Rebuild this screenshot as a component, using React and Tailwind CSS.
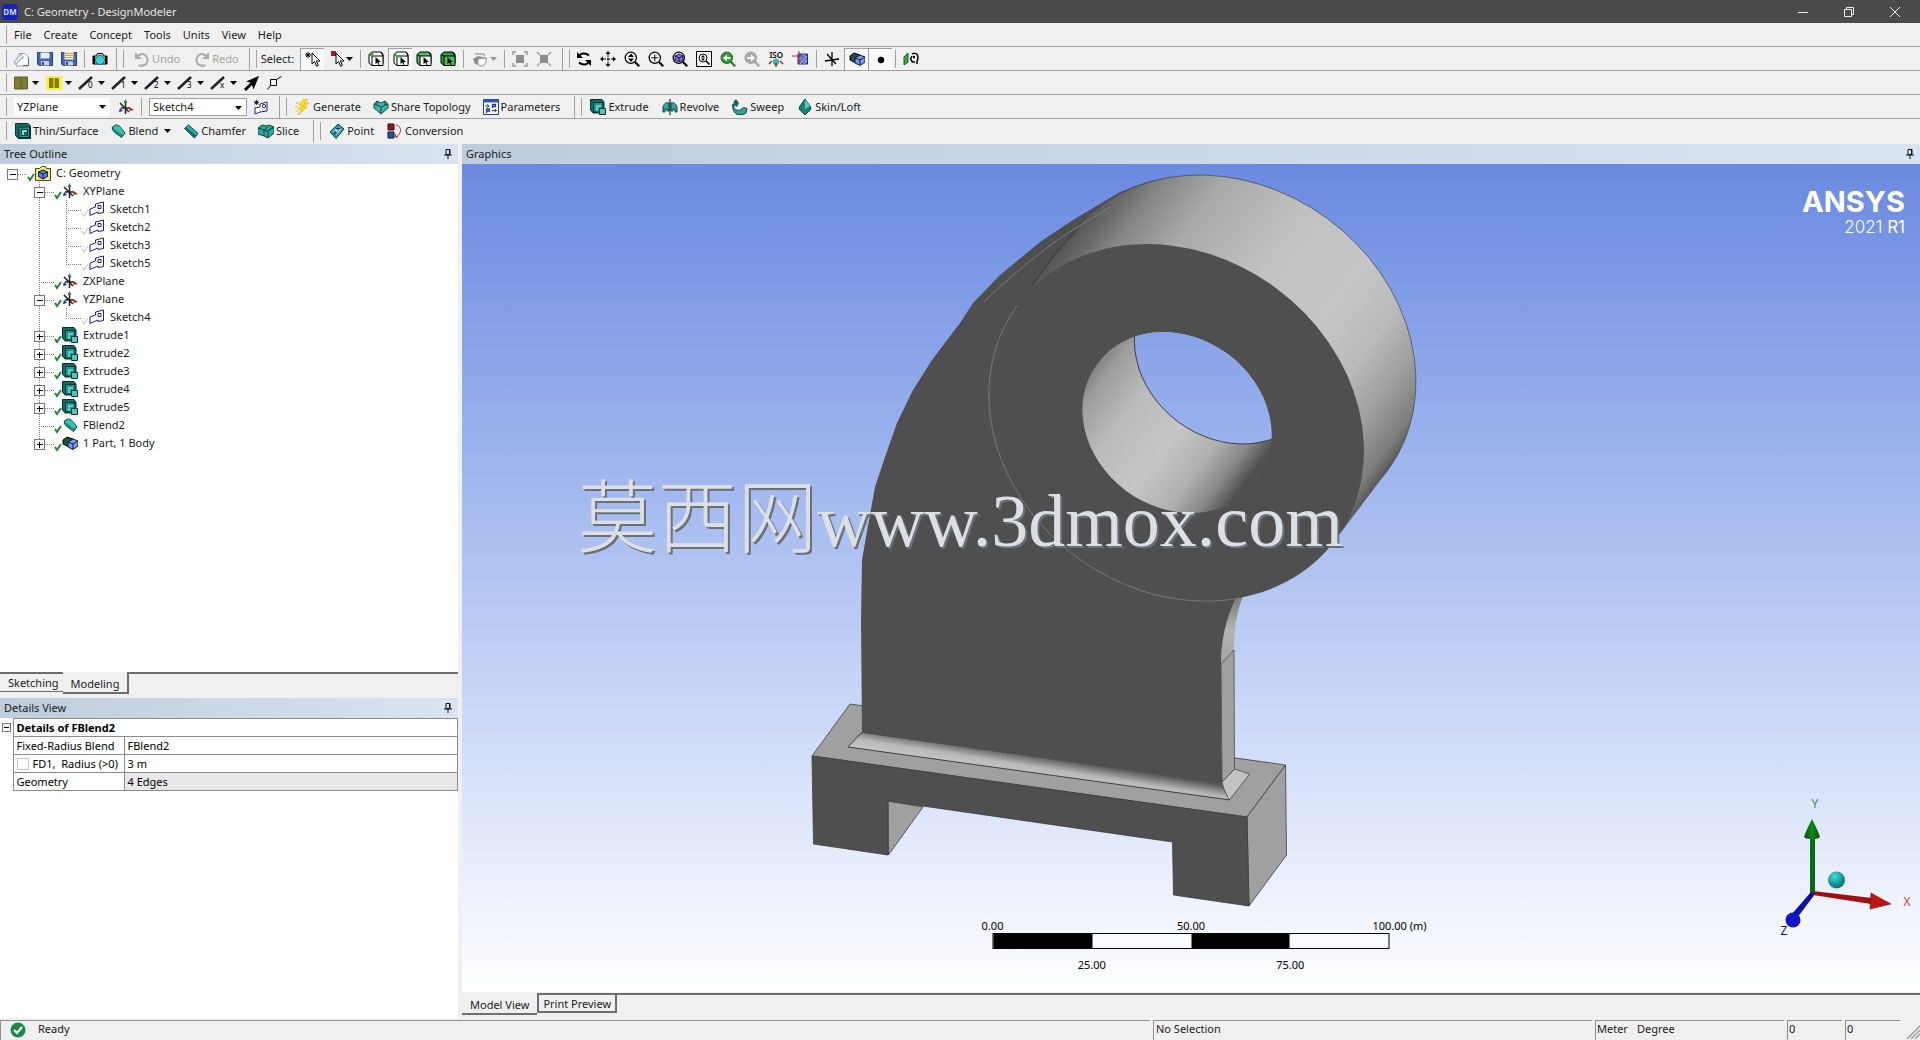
import React, { useState } from "react";

// Small 16x16 drawing used by all toolbar and tree icons
function Icon({ children, className = "" }) {
  return (
    <svg className={`w-4 h-4 shrink-0 ${className}`} viewBox="0 0 16 16" fill="none" aria-hidden="true">
      {children}
    </svg>
  );
}

function CubeOutline({ face = "#fff", side = "#fff" }) {
  return (
    <>
      <path d="M1 3.5 4 1h9l2 2v9l-2 2.5H4L1 12z" fill={side} stroke="#000" />
      <path d="M4 5h11v9.5H4z" fill={face} stroke="#000" />
      <path d="M1 3.5 4 5M13 1l2 4" stroke="#000" />
      <path d="M7.5 6v7l1.8-1.6L10.5 14l1-.6-1-2.4H13z" fill="#000" />
    </>
  );
}

function Glass({ children, color = "#000", fill = "#fff" }) {
  return (
    <>
      <circle cx="6.8" cy="6.8" r="5.6" fill={fill} stroke={color} strokeWidth="1.3" />
      <path d="m11 11 4.2 4.2" stroke={color} strokeWidth="2.2" />
      {children}
    </>
  );
}

function ArrowCursor({ x = 0 }) {
  return (
    <path
      d={`M${6 + x} 2v11l2.6-2.4 2 4.6 1.8-.8-2-4.4H${14 + x}z`}
      fill="#fff"
      stroke="#000"
      strokeWidth="1"
    />
  );
}

const icons = {
  new: (
    <>
      <path d="M6 2.5h6L15.500 6v9H3" fill="#fff" stroke="#9aa3c4" />
      <path d="M1 11c2-1 3-4 6-8 2 1 3 2 3 4-3 1-5 3-7 7z" fill="#e8eaf2" stroke="#8d93a8" />
      <path d="M10 14.500h5.500V7" stroke="#5a6490" />
    </>
  ),
  save: (
    <>
      <path d="M.5 1.500h15v13H2l-1.500-1.500z" fill="#4763b3" stroke="#27408b" />
      <path d="M3.500 1.500h9v6h-9z" fill="#e9eefb" />
      <path d="M4 10h8v4.500H4z" fill="#c8cfdf" />
      <path d="M5 11h2v3H5z" fill="#27408b" />
    </>
  ),
  saveAs: (
    <>
      <path d="M.5 1.500h15v13H2l-1.500-1.500z" fill="#4763b3" stroke="#27408b" />
      <path d="M3.500.5h9v8h-9z" fill="#fff6df" />
      <path d="M4 2.500h8M4 4.500h8M4 6.500h8" stroke="#e09a3a" />
      <path d="M4 10.500h8v4H4z" fill="#c8cfdf" />
      <path d="M5 11h2v3H5z" fill="#27408b" />
    </>
  ),
  camera: (
    <>
      <path d="M1 5h3l1.500-2.500h5L12 5h3v8H1z" fill="#c9ccd0" stroke="#000" />
      <path d="M1 5h2v8H1zM13 5h2v8h-2z" fill="#000" />
      <circle cx="8" cy="9" r="4.500" fill="#3bd3d3" stroke="#077" />
    </>
  ),
  undo: <path d="M2 2v5h5M2.500 7C4 3.500 8 2 11 4s3.500 6.500 1 9-6 2-7.500 1" stroke="#a9a9a9" strokeWidth="2" />,
  redo: <path d="M14 2v5H9M13.500 7C12 3.500 8 2 5 4s-3.500 6.500-1 9 6 2 7.500 1" stroke="#a9a9a9" strokeWidth="2" />,
  selectNew: (
    <>
      <ArrowCursor x={1} />
      <path d="M3 1v6M0 4h6M1 2l4 4M5 2 1 6" stroke="#000" />
    </>
  ),
  selectBox: (
    <>
      <path d="M1 0h5v5H1z" fill="#9b1c2f" />
      <ArrowCursor />
    </>
  ),
  vertexCube: (
    <>
      <CubeOutline />
      <circle cx="3.500" cy="3.500" r="2" fill="#35b04b" />
    </>
  ),
  edgeCube: (
    <>
      <CubeOutline />
      <path d="M1.500 3.500 4.500 5.500h5" stroke="#35b04b" strokeWidth="2" />
    </>
  ),
  faceCube: <CubeOutline side="#46c45a" />,
  bodyCube: <CubeOutline side="#2d9c3c" face="#46c45a" />,
  greyCube: (
    <>
      <path d="M1 8l5-3 9 2-4 8-8-2z" fill="#8f8f8f" />
      <path d="M6 8l8-1v5l-4 3-4-1z" fill="#fff" stroke="#999" />
      <path d="M3 3h8l2 2" stroke="#a6a6a6" strokeWidth="1.500" />
    </>
  ),
  extend: (
    <>
      <path d="M4 4h8v8H4z" fill="#8c8c8c" />
      <path d="M1 4V1h3M12 1h3v3M15 12v3h-3M4 15H1v-3" stroke="#999" strokeWidth="1.500" />
    </>
  ),
  shrink: (
    <>
      <path d="M4 4h8v8H4z" fill="#8c8c8c" />
      <path d="m1 1 3 3M15 1l-3 3M15 15l-3-3M1 15l3-3" stroke="#999" strokeWidth="1.300" />
    </>
  ),
  rotate: (
    <>
      <path d="M2.500 5.500C4 2.500 9 1 13 4.500M13.500 10.500C12 13.500 7 15 3 11.500" stroke="#000" strokeWidth="2" />
      <path d="M1 1v6h6zM15 15V9H9z" fill="#000" />
    </>
  ),
  pan: (
    <>
      <path d="M8 3v10M3 8h10" stroke="#000" strokeDasharray="3 1" />
      <path d="m8 0 2.500 3h-5zM8 16l2.500-3h-5zM0 8l3-2.500v5zM16 8l-3-2.500v5z" fill="#000" />
    </>
  ),
  zoom: <Glass><path d="m7 2.500 3 3.500H4zM7 11l3-3.500H4z" fill="#000" /></Glass>,
  zoomIn: <Glass><path d="M6.800 3.500v7M3.300 6.800h7" stroke="#000" /></Glass>,
  zoomBody: (
    <Glass>
      <path d="m3 5 4-2 4 2v4l-4 2-4-2z" fill="#7b78d6" stroke="#1b1464" />
      <path d="m3 5 4 2 4-2M7 7v4" stroke="#1b1464" />
    </Glass>
  ),
  zoomBox: (
    <>
      <path d="M.5.5h15v15H.5z" fill="#fff" stroke="#000" />
      <circle cx="7" cy="7" r="4" stroke="#000" />
      <path d="m7 4 2 2.500H5zM7 10l2-2.500H5z" fill="#000" />
      <path d="m10 10 3.500 3.500" stroke="#000" strokeWidth="1.700" />
    </>
  ),
  zoomPrev: <Glass color="#1f7a1f" fill="#3f9b3a"><path d="M3 7l4-3.500V6h3.500v2H7v2.500z" fill="#fff" /></Glass>,
  zoomNext: <Glass color="#a3a3a3" fill="#a9a9a9"><path d="M11 7 7 3.500V6H3.500v2H7v2.500z" fill="#fff" /></Glass>,
  sketchPlane: (
    <>
      <path d="M6 3h9.500v10H6z" fill="#6177cf" stroke="#1e2a7a" />
      <path d="m6 9 6-6M8 13l7-8M12 13l3-4" stroke="#aebaf0" />
      <path d="M7 0v13M0 5h11" stroke="#b0203a" />
    </>
  ),
  axes: <path d="M8 1v14M1 10l14-2M3 3l9 10" stroke="#000" strokeWidth="1.300" />,
  shaded: (
    <>
      <path d="m1 5 4-3 6 2v7l-4 1-6-3z" fill="#1f5436" stroke="#000" />
      <path d="m6 7 5-3 5 2v5l-5 3.500L6 12z" fill="#7d9be4" stroke="#0d1c52" />
      <path d="m6 7 5 2 5-3M11 9v5" stroke="#0d1c52" />
    </>
  ),
  dot: <circle cx="8" cy="9" r="3.200" fill="#000" />,
  lookAt: (
    <>
      <path d="m1 6 4-4v9l-4 3z" fill="#33b04a" stroke="#0b5c1c" />
      <path d="M9 3c3-2 6 0 6 3s-1 3-1 5v2M9 5c-1 2-2 3-1 4 1 0 0 2 2 2h2" stroke="#000" strokeWidth="1.500" />
      <circle cx="11" cy="6" r="1.200" fill="#000" />
    </>
  ),
  olive: <path d="M1.500 2h13v12h-13zM8 2v12" fill="#7e7e3c" stroke="#5f5f24" />,
  yellow: (
    <>
      <path d="M0 1h16v14H0z" fill="#f4f04a" />
      <path d="M3 3h4.500v10H3zM8.500 3H13v10H8.500z" fill="#857f00" />
    </>
  ),
  bigArrow: <path d="M15 1 2 6.500l4.500 1L0 14l2 2 6-6 1.500 4.500z" fill="#000" />,
  boxArrow: (
    <>
      <path d="M3.500 4.500h6v6h-6z" stroke="#000" fill="#fff" />
      <path d="m9.500 4.500 5-3M3.500 10.500l-3 4" stroke="#000" />
    </>
  ),
  plane: (
    <>
      <path d="M7.500 2v13M2 4l9 9M3 9h9" stroke="#222" strokeWidth="1.500" />
      <path d="m7.500 0 2 4h-4z" fill="#2c8f3f" />
      <path d="m16 11-4.500 1V8z" fill="#b3262c" />
      <path d="m1 13 1-4 3 3z" fill="#1d2a9a" />
    </>
  ),
  newSketch: (
    <>
      <path d="m2 9 5-1V5l7-2v9l-7 1-5 2z" stroke="#20208a" fill="#fff" />
      <circle cx="11" cy="7" r="1.700" stroke="#20208a" />
      <path d="M3.500 1v5M1 3.500h5M1.500 1.500l4 4M5.500 1.500l-4 4" stroke="#000" strokeWidth=".8" />
    </>
  ),
  sketch: (
    <>
      <path d="M1 8 6.500 6V3L14.500 1v10.500L9 12.500V11l-6 2.500-2 1z" stroke="#20207a" fill="#fff" />
      <path d="M9 4.500h3v3H9z" stroke="#20207a" />
    </>
  ),
  generate: (
    <>
      <path d="m9 0-5 6h4l-5 4h4l-4 6 9-8H8l6-4H9l4-4z" fill="#ffe600" stroke="#c9a300" strokeWidth=".6" />
      <path d="M1 4h3M0 8h3M1 12h2" stroke="#e5c100" />
    </>
  ),
  share: (
    <>
      <path d="M1 5 4 2l4 2 4-2 3 3v4l-7 6-7-6z" fill="#3fb5a8" stroke="#0c4d49" />
      <path d="m1 5 7 3 7-3M8 8v7M4 2v4M12 2v4" stroke="#0c4d49" />
    </>
  ),
  params: (
    <>
      <path d="M.5.5h15v15H.5z" fill="#fff" stroke="#1d3e8a" />
      <path d="M.5.5h15v3H.5z" fill="#2d5ab8" />
      <path d="M2 7h4M4 5.500 6 7 4 8.500M9 11.500h4M11.500 10l2 1.500-2 1.500" stroke="#1d3e8a" />
      <path d="M9.500 9V5.500h3v2h-3M3.500 14v-4h3v2h-3" stroke="#1d3e8a" strokeWidth="1.300" />
    </>
  ),
  extrude: (
    <>
      <path d="M.5.5 12 .5 14 3v11H3L.5 11z" fill="#126d66" stroke="#06302f" />
      <path d="M3.500 3.500h9.500v9.500H3.500z" fill="#1d968c" stroke="#06302f" />
      <path d="M6 6h5v2H8v4H6z" fill="#57d0c6" />
      <path d="M9.500 9.500h6v6h-6z" fill="#4cc7bd" stroke="#06302f" />
    </>
  ),
  thin: (
    <>
      <path d="M.5.5 13 .5 15.500 3v12.500H3L.5 12z" fill="#126d66" stroke="#06302f" />
      <path d="M4 4h10.500v10.500H4z" fill="#1d968c" stroke="#06302f" />
      <path d="M6.500 6.500h6v6h-6z" fill="#8fd8d2" stroke="#06302f" />
      <path d="M9 9h3.500v3.500H9z" fill="#126d66" />
    </>
  ),
  revolve: (
    <>
      <path d="M1 8c1-4 4-5 6-4v8H5v-2H3v3H1zM15 8c-1-4-4-5-6-4v8h2v-2h2v3h2z" fill="#2fa79c" stroke="#0a4643" />
      <path d="M8 0v16" stroke="#000" />
    </>
  ),
  sweep: (
    <>
      <path d="M1.500 5c0 5 2 7 7 6l3-2.500 3.500 1-1 4.500-3 1.500H6C2 14.500.500 10 .5 6z" fill="#2fa79c" stroke="#0a4643" />
      <path d="m4 0 3 4-2 4-4-2 1-4z" fill="#126d66" />
    </>
  ),
  skin: (
    <>
      <path d="m8 0 5 7 1 3-6 6-6-6 1-3z" fill="#1d8077" stroke="#0a4643" />
      <path d="m8 0 5 7-5 3z" fill="#57c7bd" />
    </>
  ),
  blend: (
    <>
      <path d="M2 4.500 5.500 2c3 0 5 1.500 6 3.500L15 10l-3.500 4.500L7 11C5 10 2.500 8 2 4.500z" fill="#179287" stroke="#0a4643" />
      <path d="M5.500 2.500c3 0 5 1.500 6 3.500l3 4-2 2L3 5z" fill="#40bdb1" />
    </>
  ),
  chamfer: (
    <>
      <path d="m1.500 5.500 4-3.500L15 10.500 11.500 15z" fill="#2fb0a4" stroke="#0a4643" />
      <path d="m1.500 5.500 10 9.500 1.500-2.500L3 4z" fill="#126d66" />
    </>
  ),
  slice: (
    <>
      <path d="m0 5 4-3 4 1 3-1 5 2v6l-6 5-4-2-6-2z" fill="#2fa79c" stroke="#0a4643" />
      <path d="m0 5 6 2 4-3M6 7v6M6 7l4 1 6-4M10 8v7M11 7l4-2.500" stroke="#0a4643" />
    </>
  ),
  point: (
    <>
      <path d="m1 9 8-8 6 5-8 9.500z" fill="#2f9a98" stroke="#0a4643" />
      <path d="m3.500 9 5.500-5.500L12.500 6 7 12.500z" fill="#9ad4e0" />
      <path d="M9 3.500v4M7 5.500h4M6 8v4M4 10h4" stroke="#102a6a" />
    </>
  ),
  conversion: (
    <>
      <path d="M1 1h6v6H1z" fill="#8a1c2d" stroke="#400" />
      <path d="M1 9h6v6H1z" fill="#2b56a8" stroke="#013" />
      <path d="M9 2c6 1 6 9 0 12M11 14H8.500v-3" stroke="#c0392b" />
    </>
  ),
  folder: (
    <>
      <path d="M.5 3.500h4l2-2h4l1 2h4v12H.5z" fill="#f5e77a" stroke="#4a4520" />
      <path d="m3.500 7 4.500-2 4.500 2v4.500L8 14l-4.500-2.500z" fill="#5f83cf" stroke="#0d1c52" />
      <path d="m3.500 7 4.500 2 4.500-2M8 9v5" stroke="#0d1c52" />
    </>
  ),
};

// Slanted pen with the thickness mark below it
function LineIcon({ mark }) {
  return (
    <svg className="w-4 h-4 shrink-0 overflow-visible" viewBox="0 0 16 16" aria-hidden="true">
      <path d="M0 14 13 2" stroke="#222" strokeWidth="2.500" />
      <text x="9" y="13" fontSize="8" fontFamily="Noto Sans" fill="#000">{mark}</text>
    </svg>
  );
}

function Caret({ color = "#000" }) {
  return (
    <svg className="w-[7px] h-1 shrink-0" viewBox="0 0 7 4" aria-hidden="true">
      <path d="M0 0h7L3.500 4z" fill={color} />
    </svg>
  );
}

function IconButton({ icon, label, active }) {
  return (
    <button
      aria-label={label}
      className={`w-6 h-[22px] flex items-center justify-center ${
        active ? "bg-[#f8f8f8] border-t border-l border-[#a0a0a0]" : ""
      }`}
    >
      <Icon>{icons[icon]}</Icon>
    </button>
  );
}

function TextButton({ icon, children, disabled, caret }) {
  return (
    <button
      disabled={disabled}
      className="h-[22px] flex items-center gap-[2px] whitespace-nowrap disabled:text-[#a3a3a3]"
    >
      <Icon>{icons[icon]}</Icon>
      <span>{children}</span>
      {caret && <span className="pl-1"><Caret /></span>}
    </button>
  );
}

function Grip() {
  return <div className="w-[3px] h-[18px] mr-2 ml-1 shrink-0 border-r border-[#a0a0a0]"></div>;
}

function Sep() {
  return <div className="w-px h-[18px] mx-[3px] shrink-0 bg-[#a0a0a0]"></div>;
}

function BarEnd() {
  return <div className="w-px h-[22px] shrink-0 bg-[#a0a0a0]"></div>;
}

function Bar({ children, last }) {
  return (
    <div className={`h-6 flex items-center ${last ? "" : "border-b border-[#a3a3a3]"}`}>
      {children}
    </div>
  );
}

function Combo({ label, value, options, className }) {
  return (
    <div className={`relative h-[18px] ${className}`}>
      <select
        aria-label={label}
        defaultValue={value}
        className="w-full h-full appearance-none bg-white pl-[3px] pr-4 outline-none"
      >
        {options.map((o) => (
          <option key={o}>{o}</option>
        ))}
      </select>
      <span className="absolute right-1 top-[7px] pointer-events-none">
        <Caret />
      </span>
    </div>
  );
}

function Pin() {
  return (
    <svg className="w-2 h-3" viewBox="0 0 8 12" fill="none" aria-hidden="true">
      <path d="M2 1.500h4v5H2zM0 7h8M4 7v4" stroke="#111" />
      <path d="M5.500 1v6" stroke="#111" />
    </svg>
  );
}

function PanelHeader({ title }) {
  return (
    <div className="h-5 shrink-0 flex items-center justify-between pl-1 pr-[6px] bg-linear-to-r from-[#bfccdb] to-[#d8e4f2]">
      <span>{title}</span>
      <button aria-label="Pin panel">
        <Pin />
      </button>
    </div>
  );
}

const planes = ["XYPlane", "ZXPlane", "YZPlane"];

const tree = [
  { label: "C: Geometry", icon: "folder", level: 0, box: "-" },
  { label: "XYPlane", icon: "plane", level: 1, box: "-" },
  { label: "Sketch1", icon: "sketch", level: 2 },
  { label: "Sketch2", icon: "sketch", level: 2 },
  { label: "Sketch3", icon: "sketch", level: 2 },
  { label: "Sketch5", icon: "sketch", level: 2, last: true },
  { label: "ZXPlane", icon: "plane", level: 1 },
  { label: "YZPlane", icon: "plane", level: 1, box: "-" },
  { label: "Sketch4", icon: "sketch", level: 2, last: true },
  { label: "Extrude1", icon: "extrude", level: 1, box: "+" },
  { label: "Extrude2", icon: "extrude", level: 1, box: "+" },
  { label: "Extrude3", icon: "extrude", level: 1, box: "+" },
  { label: "Extrude4", icon: "extrude", level: 1, box: "+" },
  { label: "Extrude5", icon: "extrude", level: 1, box: "+" },
  { label: "FBlend2", icon: "blend", level: 1 },
  { label: "1 Part, 1 Body", icon: "shaded", level: 1, box: "+", last: true },
];

// One 27px column of the tree: dotted guides plus the +/- box
function Guide({ vertical, half, horizontal, box }) {
  return (
    <svg className="w-[27px] h-[18px] shrink-0" viewBox="0 0 27 18" fill="none" shapeRendering="crispEdges" aria-hidden="true">
      {vertical && <path d={half ? "M12.500 0v10" : "M12.500 0v18"} stroke="#808080" strokeDasharray="1 1" />}
      {horizontal && <path d="M12 10.500h15" stroke="#808080" strokeDasharray="1 1" />}
      {box && <path d="M7.500 5.500h10v10h-10z" fill="#fff" stroke="#777" />}
      {box && <path d="M10 10.500h6" stroke="#000" />}
      {box === "+" && <path d="M12.500 8v6" stroke="#000" />}
    </svg>
  );
}

function TreeRow({ item }) {
  const muted = item.level === 2;
  return (
    <li className="h-[18px] flex items-center whitespace-nowrap">
      {item.level > 0 && <Guide />}
      {item.level > 1 && <Guide vertical />}
      <Guide vertical={item.level > 0} half={item.last} horizontal box={item.box} />
      <svg className="w-2 h-[18px] shrink-0" viewBox="0 0 8 18" fill="none" aria-hidden="true">
        <path d="m1 13 2 3 4-6" stroke={muted ? "#c9d3c9" : "#1f8a2c"} strokeWidth={muted ? 1.3 : 2} />
      </svg>
      <Icon>{icons[item.icon]}</Icon>
      <span className="pl-[5px] pb-px">{item.label}</span>
    </li>
  );
}

// Circle of the ring seen at an angle, as a path so gradients stay in page axes
const outerRing = (cx, cy) =>
  `M${cx - 159.2} ${cy - 116.9}a197.5 167.3 36.3 1 1 318.4 233.8a197.5 167.3 36.3 1 1 -318.4 -233.8z`;
const boreRing = (cx, cy) =>
  `M${cx - 79.6} ${cy - 58.5}a98.8 83.7 36.3 1 1 159.2 117a98.8 83.7 36.3 1 1 -159.2 -117z`;

function Model() {
  return (
    <svg className="absolute inset-0 w-full h-full" viewBox="462 164 1458 828" fill="none" aria-label="Bracket model">
      <defs>
        <linearGradient id="rim" gradientUnits="userSpaceOnUse" x1="1080" y1="212" x2="1400" y2="452">
          <stop offset="0" stopColor="#4f4f4f" />
          <stop offset=".06" stopColor="#686868" />
          <stop offset=".12" stopColor="#868686" />
          <stop offset=".24" stopColor="#a9a9a9" />
          <stop offset=".45" stopColor="#c1c1c1" />
          <stop offset=".65" stopColor="#c6c6c6" />
          <stop offset=".78" stopColor="#bababa" />
          <stop offset=".89" stopColor="#9c9c9c" />
          <stop offset=".97" stopColor="#7c7c7c" />
          <stop offset="1" stopColor="#5c5c5c" />
        </linearGradient>
        <linearGradient id="bore" gradientUnits="userSpaceOnUse" x1="1083" y1="372" x2="1243" y2="492">
          <stop offset="0" stopColor="#777" />
          <stop offset=".1" stopColor="#9c9c9c" />
          <stop offset=".3" stopColor="#bbb" />
          <stop offset=".55" stopColor="#c6c6c6" />
          <stop offset=".75" stopColor="#b0b0b0" />
          <stop offset=".88" stopColor="#888" />
          <stop offset=".98" stopColor="#505050" />
        </linearGradient>
        <linearGradient id="fillet" gradientUnits="userSpaceOnUse" x1="1040" y1="756" x2="1037" y2="775">
          <stop offset="0" stopColor="#555" />
          <stop offset=".6" stopColor="#b8b8b8" />
          <stop offset="1" stopColor="#c4c4c4" />
        </linearGradient>
        <linearGradient id="neck" x1="0" y1="0" x2="0" y2="1">
          <stop offset="0" stopColor="#777" />
          <stop offset=".5" stopColor="#b4b4b4" />
          <stop offset="1" stopColor="#a2a2a2" />
        </linearGradient>
        <clipPath id="frontBore">
          <path d={boreRing(1177, 422.5)} />
        </clipPath>
        <mask id="through" maskUnits="userSpaceOnUse" x="462" y="164" width="1458" height="828">
          <path d="M462 164h1458v828H462z" fill="#fff" />
          <g clipPath="url(#frontBore)">
            <path d={boreRing(1229, 353.5)} fill="#000" />
          </g>
        </mask>
      </defs>

      {/* Base */}
      <g stroke="#3c3c3c" strokeWidth=".8" strokeLinejoin="round">
        <path d="m812 756 38-52 435.500 61L1247 817z" fill="#a0a0a0" />
        <path d="m1247 817 38.500-52 1 90-37.500 51z" fill="#a0a0a0" />
        <path d="m888 801 35 6-34.500 48z" fill="#a0a0a0" />
        <path d="m812 756 435 61 2 89-75.500-11-1-53L888 801v54l-74.500-11z" fill="#4f4f4f" />
      </g>

      {/* Fillet around the upright */}
      <path d="m862 732 360 50 8 18-382-53z" fill="url(#fillet)" />
      <path d="m1222 782 12.500-13 15 5-20 26c-3-5-6-11-7.500-18z" fill="#c2c2c2" stroke="#3c3c3c" strokeWidth=".7" />
      <path d="m862 732-14 15 382 53" stroke="#333" strokeWidth=".9" />

      {/* Upright side wall */}
      <path d="M1221 664c0-25 5-46 14-68h8c-6 15-9 32-9 54z" fill="url(#neck)" />
      <path d="m1221 664 13-14 .500 119-12.500 13z" fill="#a0a0a0" stroke="#3c3c3c" strokeWidth=".7" />

      <g mask="url(#through)">
        {/* Upright face */}
        <path
          d="M862 733 861 620 862 560 866 537 875 487 885 457 897 423 913 390 932 360 960 323 973 303 1000 275 1040 242 1073 220 1120 192 1147 182 1173 177 1240 260 1300 500 1236 598C1226 618 1221 640 1221 664L1222 783z"
          fill="#4f4f4f"
        />
        {/* Ring outer surface */}
        <path d={outerRing(1228.5, 353.5)} fill="url(#rim)" stroke="#444" strokeWidth=".7" />
        <path d="m1017 306 52-69 319 233-52 69z" fill="url(#rim)" />
        <path d="M984 302c22-22 46-41 69-59 20-14 38-24 57-36" stroke="#85857c" strokeWidth=".8" />
        <path d="M1032 286c14-22 32-43 48-59" stroke="#333" strokeWidth=".9" />
        {/* Ring front face */}
        <path d={outerRing(1176.5, 422.5)} fill="#4f4f4f" />
        <path
          d="M1017.300 305.600A197.500 167.300 36.300 0 0 1240 598"
          stroke="#7d7d7d"
          strokeWidth=".9"
        />
        <path d={boreRing(1177, 422.5)} fill="url(#bore)" />
      </g>
      <g clipPath="url(#frontBore)">
        <path d={boreRing(1229, 353.5)} stroke="#333" strokeWidth=".9" />
      </g>
    </svg>
  );
}

function Triad() {
  return (
    <svg className="absolute right-0 bottom-10 w-[150px] h-40" viewBox="1770 792 150 160" aria-label="Axis triad">
      <defs>
        <radialGradient id="ball" cx=".4" cy=".3" r=".7">
          <stop offset="0" stopColor="#3fe0e0" />
          <stop offset="1" stopColor="#056a6e" />
        </radialGradient>
        <linearGradient id="green">
          <stop offset="0" stopColor="#0a4a0a" />
          <stop offset=".5" stopColor="#0c8a1a" />
          <stop offset="1" stopColor="#0a4a0a" />
        </linearGradient>
      </defs>
      <path d="M1810 837h5v56h-5z" fill="#0b6a14" />
      <path d="M1812 819c3 6 6 12 8 18-3 3-13 3-16 0 2-6 5-12 8-18z" fill="url(#green)" />
      <path d="m1813 891 59 7-1 6-58-9z" fill="#a01010" />
      <path d="m1871 893 20 11-21 5z" fill="#c01414" stroke="#7d0c0c" strokeWidth=".6" />
      <path d="m1811 892 4 2-18 24-6-3z" fill="#1010a8" />
      <circle cx="1793" cy="920" r="7.500" fill="#1414c8" />
      <circle cx="1836.500" cy="880" r="8.500" fill="url(#ball)" />
      <g fontFamily="Noto Sans" fontSize="12" textAnchor="middle">
        <text x="1815" y="808" fill="#2a9a5a">Y</text>
        <text x="1907" y="906" fill="#d03a3a">X</text>
        <text x="1784" y="935" fill="#10106a">Z</text>
      </g>
    </svg>
  );
}

function ScaleBar() {
  return (
    <div className="absolute left-1/2 bottom-5 -translate-x-1/2 w-[397px] text-black">
      <div className="flex justify-between h-[14px] leading-[14px]">
        <span className="w-0 flex justify-center">0.00</span>
        <span className="w-0 flex justify-center">50.00</span>
        <span className="w-0 flex justify-center whitespace-nowrap">
          <span className="pl-5">100.00 (m)</span>
        </span>
      </div>
      <div className="h-4 flex border border-black bg-white/40">
        <div className="flex-1 bg-black"></div>
        <div className="flex-1"></div>
        <div className="flex-1 bg-black"></div>
        <div className="flex-1"></div>
      </div>
      <div className="flex justify-around h-[23px] pt-[9px] leading-[14px]">
        <span>25.00</span>
        <span>75.00</span>
      </div>
    </div>
  );
}

function App() {
  const [radiusParam, setRadiusParam] = useState(false);

  return (
    <div className="relative h-screen flex flex-col overflow-hidden bg-[#f0f0f0] font-['Noto_Sans',sans-serif] text-[11px] leading-[16px] text-[#1a1a1a]">
      {/* Title bar */}
      <header className="h-[23px] shrink-0 flex items-center bg-[#4a4a4a] text-[#e4e4e4]">
        <div className="w-4 h-4 ml-[2px] rounded-sm bg-[#1424b4] text-[8px] leading-[16px] font-bold text-center text-[#d8dcff]">
          DM
        </div>
        <h1 className="pl-[6px] text-[11px]">C: Geometry - DesignModeler</h1>
        <div className="ml-auto pr-[2px] flex">
          <button aria-label="Minimize" className="w-[46px] h-[22px] flex items-center justify-center">
            <svg className="w-[10px] h-[10px]" viewBox="0 0 10 10"><path d="M0 5.500h10" stroke="#eee" /></svg>
          </button>
          <button aria-label="Restore" className="w-[46px] h-[22px] flex items-center justify-center">
            <svg className="w-[10px] h-[10px]" viewBox="0 0 10 10" fill="none">
              <path d="M.5 2.500h7v7h-7zM2.500 2V.5h7v7H8" stroke="#eee" />
            </svg>
          </button>
          <button aria-label="Close" className="w-[46px] h-[22px] flex items-center justify-center">
            <svg className="w-[10px] h-[10px]" viewBox="0 0 10 10"><path d="m0 0 10 10M10 0 0 10" stroke="#eee" /></svg>
          </button>
        </div>
      </header>

      {/* Menu and toolbars */}
      <div className="shrink-0 pb-px">
        <Bar>
          <Grip />
          <nav className="flex gap-3 -ml-px">
            {["File", "Create", "Concept", "Tools", "Units", "View", "Help"].map((m) => (
              <button key={m}>{m}</button>
            ))}
          </nav>
        </Bar>

        <Bar>
          <Grip />
          <div className="flex items-center -ml-[6px]">
            <IconButton icon="new" label="New" />
            <IconButton icon="save" label="Save" />
            <IconButton icon="saveAs" label="Save as" />
            <Sep />
            <IconButton icon="camera" label="Image capture" />
          </div>
          <div className="w-1"></div>
          <BarEnd />
          <Grip />
          <div className="flex items-center gap-[14px] pl-[2px] pr-[10px]">
            <TextButton icon="undo" disabled>Undo</TextButton>
            <TextButton icon="redo" disabled>Redo</TextButton>
          </div>
          <BarEnd />
          <Grip />
          <span className="-ml-1 pr-[6px]">Select:</span>
          <IconButton icon="selectNew" label="New selection" active />
          <button aria-label="Select mode" className="flex items-center pl-[6px] pr-1">
            <Icon>{icons.selectBox}</Icon>
            <Caret />
          </button>
          <Sep />
          <IconButton icon="vertexCube" label="Points" />
          <IconButton icon="edgeCube" label="Edges" active />
          <IconButton icon="faceCube" label="Faces" />
          <IconButton icon="bodyCube" label="Bodies" />
          <Sep />
          <button aria-label="Adjacent" disabled className="w-[34px] flex items-center justify-center gap-[2px]">
            <Icon>{icons.greyCube}</Icon>
            <Caret color="#999" />
          </button>
          <Sep />
          <IconButton icon="extend" label="Expand selection" />
          <IconButton icon="shrink" label="Shrink selection" />
          <div className="w-[6px]"></div>
          <BarEnd />
          <Grip />
          <div className="flex items-center -ml-[6px]">
            <IconButton icon="rotate" label="Rotate" />
            <IconButton icon="pan" label="Pan" />
            <IconButton icon="zoom" label="Zoom" />
            <IconButton icon="zoomIn" label="Box zoom" />
            <IconButton icon="zoomBody" label="Zoom to fit" />
            <IconButton icon="zoomBox" label="Magnifier" />
            <IconButton icon="zoomPrev" label="Previous view" />
            <IconButton icon="zoomNext" label="Next view" />
            <button aria-label="Isometric view" className="w-6 flex flex-col items-center text-[8px] leading-[7px] text-black font-semibold">
              ISO
              <svg className="w-4 h-[9px]" viewBox="0 0 16 9" fill="none" aria-hidden="true">
                <path d="m5 2 3-2 3 2v4L8 8 5 6z" fill="#3cb9a8" />
                <path d="M4 3 1 6M8 5v4" stroke="#b3262c" strokeWidth="1.500" />
                <path d="m12 3 3 3" stroke="#b3262c" strokeWidth="1.500" />
              </svg>
            </button>
            <IconButton icon="sketchPlane" label="Display plane" />
            <div className="w-px"></div>
            <Sep />
            <IconButton icon="axes" label="Axes" />
            <IconButton icon="shaded" label="Display model" active />
            <IconButton icon="dot" label="Display points" active />
            <Sep />
            <IconButton icon="lookAt" label="Look at face" />
          </div>
        </Bar>

        <Bar>
          <Grip />
          <div className="flex items-center gap-[7px] -ml-[2px]">
            {["olive", "yellow"].map((name) => (
              <button key={name} aria-label={name} className="w-[26px] flex items-center gap-[3px]">
                <Icon>{icons[name]}</Icon>
                <Caret />
              </button>
            ))}
            {["0", "1", "2", "3", "x"].map((mark) => (
              <button key={mark} aria-label={`Edge ${mark}`} className="w-[26px] flex items-center gap-[3px]">
                <LineIcon mark={mark} />
                <Caret />
              </button>
            ))}
            <button aria-label="Direction"><Icon>{icons.bigArrow}</Icon></button>
            <button aria-label="Vertex"><Icon>{icons.boxArrow}</Icon></button>
          </div>
        </Bar>

        <Bar>
          <Grip />
          <Combo label="Plane" value="YZPlane" options={planes} className="w-24 -ml-px" />
          <div className="w-1"></div>
          <IconButton icon="plane" label="New plane" />
          <Sep />
          <div className="w-1"></div>
          <Combo label="Sketch" value="Sketch4" options={["Sketch4"]} className="w-[98px] border border-[#a0a0a0]" />
          <div className="w-[2px]"></div>
          <IconButton icon="newSketch" label="New sketch" />
          <div className="w-[6px]"></div>
          <BarEnd />
          <Grip />
          <div className="flex items-center gap-3 pr-[14px]">
            <TextButton icon="generate">Generate</TextButton>
            <TextButton icon="share">Share Topology</TextButton>
            <TextButton icon="params">Parameters</TextButton>
          </div>
          <BarEnd />
          <Grip />
          <div className="flex items-center gap-[13px]">
            <TextButton icon="extrude">Extrude</TextButton>
            <TextButton icon="revolve">Revolve</TextButton>
            <TextButton icon="sweep">Sweep</TextButton>
            <TextButton icon="skin">Skin/Loft</TextButton>
          </div>
        </Bar>

        <Bar last>
          <Grip />
          <div className="flex items-center gap-3 pr-[14px]">
            <TextButton icon="thin">Thin/Surface</TextButton>
            <TextButton icon="blend" caret>Blend</TextButton>
            <TextButton icon="chamfer">Chamfer</TextButton>
            <TextButton icon="slice">Slice</TextButton>
          </div>
          <BarEnd />
          <Grip />
          <div className="flex items-center gap-[13px]">
            <TextButton icon="point">Point</TextButton>
            <TextButton icon="conversion">Conversion</TextButton>
          </div>
        </Bar>
      </div>

      <div className="flex-1 min-h-0 flex gap-1">
        {/* Left column */}
        <aside className="w-[458px] shrink-0 flex flex-col">
          <PanelHeader title="Tree Outline" />
          <ul className="flex-1 min-h-0 overflow-hidden bg-white">
            {tree.map((item) => (
              <TreeRow key={item.label} item={item} />
            ))}
          </ul>
          <div className="h-[26px] shrink-0 flex items-start" role="tablist">
            <button role="tab" aria-selected="false" className="h-5 border-t-2 border-b border-[#6e6e6e] pl-2 pr-1">
              Sketching
            </button>
            <button role="tab" aria-selected="true" className="h-[22px] border-r-2 border-b-2 border-[#6e6e6e] px-2 pt-1">
              Modeling
            </button>
            <div className="flex-1 border-t-2 border-[#6e6e6e]"></div>
          </div>

          <PanelHeader title="Details View" />
          <div className="h-[300px] shrink-0 bg-white">
            <table className="w-full table-fixed border-collapse text-black">
              <colgroup>
                <col className="w-[13px]" />
                <col className="w-[111px]" />
                <col />
              </colgroup>
              <tbody>
                <tr className="h-[18px]">
                  <td className="p-0">
                    <button aria-label="Collapse" className="w-[9px] h-[9px] ml-[2px] flex items-center justify-center border border-[#777]">
                      <span className="w-[5px] h-px bg-black"></span>
                    </button>
                  </td>
                  <th colSpan="2" className="border border-[#8c8c8c] px-[3px] py-0 text-left font-bold">Details of FBlend2</th>
                </tr>
                <tr className="h-[18px]">
                  <td></td>
                  <td className="border border-[#8c8c8c] px-[3px] py-0 whitespace-nowrap">Fixed-Radius Blend</td>
                  <td className="border border-[#8c8c8c] px-[3px] py-0">FBlend2</td>
                </tr>
                <tr className="h-[18px]">
                  <td></td>
                  <td className="border border-[#8c8c8c] px-[3px] py-0">
                    <label className="flex items-center gap-1 whitespace-pre">
                      <input
                        type="checkbox"
                        checked={radiusParam}
                        onChange={(e) => setRadiusParam(e.target.checked)}
                        className="w-3 h-3 appearance-none border border-[#c4c4c4] bg-white checked:bg-[#2d5ab8]"
                      />
                      {"FD1,  Radius (>0)"}
                    </label>
                  </td>
                  <td className="border border-[#8c8c8c] px-[3px] py-0">3 m</td>
                </tr>
                <tr className="h-[18px]">
                  <td></td>
                  <td className="border border-[#8c8c8c] px-[3px] py-0">Geometry</td>
                  <td className="border border-[#8c8c8c] px-[3px] py-0 bg-[#e8e8e8]">4 Edges</td>
                </tr>
              </tbody>
            </table>
          </div>
        </aside>

        {/* Graphics */}
        <main className="flex-1 min-w-0 flex flex-col">
          <PanelHeader title="Graphics" />
          <div className="relative flex-1 min-h-0 overflow-hidden bg-linear-to-b from-[#6b8ae0] to-white">
            <Model />
            <div className="absolute top-[22px] right-[15px] text-right text-white font-['Inter',sans-serif]">
              <div className="text-[29px] leading-[32px] font-bold">ANSYS</div>
              <div className="text-[17px] leading-[18px] font-light">
                2021 <b>R1</b>
              </div>
            </div>
            <ScaleBar />
            <Triad />
          </div>
          <div className="h-[26px] shrink-0 flex items-start pt-px" role="tablist">
            <button role="tab" aria-selected="true" className="h-[22px] border-b-2 border-[#6e6e6e] px-2 pt-1">
              Model View
            </button>
            <button role="tab" aria-selected="false" className="h-5 border-2 border-[#6e6e6e] px-1 leading-[15px]">
              Print Preview
            </button>
            <div className="flex-1 border-t-2 border-[#6e6e6e]"></div>
          </div>
        </main>
      </div>

      {/* Status bar */}
      <footer className="h-[22px] shrink-0 flex gap-[3px] pt-[2px] bg-[#f0f0f0] leading-[14px]">
        <div className="flex-1 flex items-start gap-3 pl-[9px] pt-px border-t border-l border-[#909090]">
          <svg className="w-4 h-4" viewBox="0 0 16 16" fill="none" aria-hidden="true">
            <circle cx="8" cy="8" r="7.500" fill="#1c8a48" />
            <path d="m4 8 3 3 5-6" stroke="#fff" strokeWidth="2" />
          </svg>
          <span>Ready</span>
        </div>
        <div className="w-[439px] pl-[2px] pt-px border-t border-l border-[#909090]">No Selection</div>
        <div className="w-[189px] flex gap-[9px] pl-px pt-px border-t border-l border-[#909090]">
          <span>Meter</span>
          <span>Degree</span>
        </div>
        <div className="w-[55px] pl-px pt-px border-t border-l border-[#909090]">0</div>
        <div className="w-[55px] pl-px pt-px border-t border-l border-[#909090]">0</div>
        <svg className="w-[17px] h-5" viewBox="0 0 17 20" aria-hidden="true">
          <path d="M4 19 17 6M8 19l9-9M12 19l5-5" stroke="#a0a0a0" strokeWidth="1.500" />
        </svg>
      </footer>

      {/* Watermark */}
      <div className="absolute inset-0 pb-2 flex items-center justify-center pointer-events-none">
        <div className="flex items-baseline whitespace-nowrap text-[#dcdfe4] [text-shadow:2px_2px_0_#6b7078] leading-[80px]">
          <span className="text-[80px] font-light font-['Noto_Sans_CJK_SC',sans-serif]">莫西网</span>
          <span className="text-[74px] font-['Liberation_Serif','Noto_Sans_CJK_SC',serif]">www.3dmox.com</span>
        </div>
      </div>
    </div>
  );
}

export default App;
